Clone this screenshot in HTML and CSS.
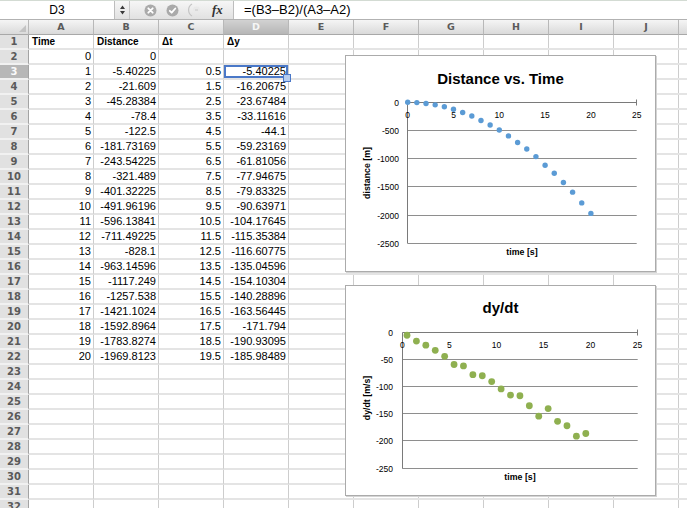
FILE: index.html
```html
<!DOCTYPE html>
<html lang="en">
<head>
<meta charset="utf-8">
<title>Sheet</title>
<link rel="stylesheet" href="styles.css">
</head>
<body>
<div class="bar">
  <div class="namebox">D3</div>
  <div class="stepper"><svg width="7" height="12" viewBox="0 0 7 12"><path d="M3.5 1.5L6 5H1z M3.5 10.5L1 7H6z" fill="#3a3a3a"/></svg></div>
  <div class="tools">
    <svg class="ico i-x" width="13" height="13" viewBox="0 0 13 13"><circle cx="6.5" cy="6.5" r="6" fill="#aaaaaa"/><path d="M4.3 4.3l4.4 4.4M8.7 4.3l-4.4 4.4" stroke="#fff" stroke-width="1.8" stroke-linecap="round"/></svg>
    <svg class="ico i-ok" width="13" height="13" viewBox="0 0 13 13"><circle cx="6.5" cy="6.5" r="6" fill="#aaaaaa"/><path d="M3.8 6.8l1.9 1.9 3.6-4.2" stroke="#fff" stroke-width="1.8" fill="none" stroke-linecap="round" stroke-linejoin="round"/></svg>
    <svg class="ico i-eq" width="12" height="14" viewBox="0 0 12 14"><path d="M4 1 A7 7 0 0 0 4 13" stroke="#c4c4c4" stroke-width="1.2" fill="none"/><circle cx="8.5" cy="7" r="3.5" fill="#e9e9e9"/><path d="M7 7h3" stroke="#cdcdcd" stroke-width="1.2"/></svg>
    <span class="fx">fx</span>
  </div>
  <div class="formula">=(B3–B2)/(A3–A2)</div>
</div>
<div class="sheet">
  <table class="grid">
    <colgroup><col class="ch"><col class="cw"><col class="cw"><col class="cw"><col class="cw"><col class="cw"><col class="cw"><col class="cw"><col class="cw"><col class="cw"><col class="cw"><col class="cw"></colgroup>
    <thead>
      <tr><th class="corner"></th><th>A</th><th>B</th><th>C</th><th class="on">D</th><th>E</th><th>F</th><th>G</th><th>H</th><th>I</th><th>J</th><th></th></tr>
    </thead>
    <tbody>
      <tr><th>1</th><td class="h">Time</td><td class="h">Distance</td><td class="h">Δt</td><td class="h">Δy</td><td class="rest" colspan="7"></td></tr>
      <tr><th>2</th><td class="n">0</td><td class="n">0</td><td></td><td></td><td class="rest" colspan="7"></td></tr>
      <tr><th class="on">3</th><td class="n">1</td><td class="n">-5.40225</td><td class="n">0.5</td><td class="n sel">-5.40225</td><td class="rest" colspan="7"></td></tr>
      <tr><th>4</th><td class="n">2</td><td class="n">-21.609</td><td class="n">1.5</td><td class="n">-16.20675</td><td class="rest" colspan="7"></td></tr>
      <tr><th>5</th><td class="n">3</td><td class="n">-45.28384</td><td class="n">2.5</td><td class="n">-23.67484</td><td class="rest" colspan="7"></td></tr>
      <tr><th>6</th><td class="n">4</td><td class="n">-78.4</td><td class="n">3.5</td><td class="n">-33.11616</td><td class="rest" colspan="7"></td></tr>
      <tr><th>7</th><td class="n">5</td><td class="n">-122.5</td><td class="n">4.5</td><td class="n">-44.1</td><td class="rest" colspan="7"></td></tr>
      <tr><th>8</th><td class="n">6</td><td class="n">-181.73169</td><td class="n">5.5</td><td class="n">-59.23169</td><td class="rest" colspan="7"></td></tr>
      <tr><th>9</th><td class="n">7</td><td class="n">-243.54225</td><td class="n">6.5</td><td class="n">-61.81056</td><td class="rest" colspan="7"></td></tr>
      <tr><th>10</th><td class="n">8</td><td class="n">-321.489</td><td class="n">7.5</td><td class="n">-77.94675</td><td class="rest" colspan="7"></td></tr>
      <tr><th>11</th><td class="n">9</td><td class="n">-401.32225</td><td class="n">8.5</td><td class="n">-79.83325</td><td class="rest" colspan="7"></td></tr>
      <tr><th>12</th><td class="n">10</td><td class="n">-491.96196</td><td class="n">9.5</td><td class="n">-90.63971</td><td class="rest" colspan="7"></td></tr>
      <tr><th>13</th><td class="n">11</td><td class="n">-596.13841</td><td class="n">10.5</td><td class="n">-104.17645</td><td class="rest" colspan="7"></td></tr>
      <tr><th>14</th><td class="n">12</td><td class="n">-711.49225</td><td class="n">11.5</td><td class="n">-115.35384</td><td class="rest" colspan="7"></td></tr>
      <tr><th>15</th><td class="n">13</td><td class="n">-828.1</td><td class="n">12.5</td><td class="n">-116.60775</td><td class="rest" colspan="7"></td></tr>
      <tr><th>16</th><td class="n">14</td><td class="n">-963.14596</td><td class="n">13.5</td><td class="n">-135.04596</td><td class="rest" colspan="7"></td></tr>
      <tr><th>17</th><td class="n">15</td><td class="n">-1117.249</td><td class="n">14.5</td><td class="n">-154.10304</td><td class="rest" colspan="7"></td></tr>
      <tr><th>18</th><td class="n">16</td><td class="n">-1257.538</td><td class="n">15.5</td><td class="n">-140.28896</td><td class="rest" colspan="7"></td></tr>
      <tr><th>19</th><td class="n">17</td><td class="n">-1421.1024</td><td class="n">16.5</td><td class="n">-163.56445</td><td class="rest" colspan="7"></td></tr>
      <tr><th>20</th><td class="n">18</td><td class="n">-1592.8964</td><td class="n">17.5</td><td class="n">-171.794</td><td class="rest" colspan="7"></td></tr>
      <tr><th>21</th><td class="n">19</td><td class="n">-1783.8274</td><td class="n">18.5</td><td class="n">-190.93095</td><td class="rest" colspan="7"></td></tr>
      <tr><th>22</th><td class="n">20</td><td class="n">-1969.8123</td><td class="n">19.5</td><td class="n">-185.98489</td><td class="rest" colspan="7"></td></tr>
      <tr><th>23</th><td></td><td></td><td></td><td></td><td class="rest" colspan="7"></td></tr>
      <tr><th>24</th><td></td><td></td><td></td><td></td><td class="rest" colspan="7"></td></tr>
      <tr><th>25</th><td></td><td></td><td></td><td></td><td class="rest" colspan="7"></td></tr>
      <tr><th>26</th><td></td><td></td><td></td><td></td><td class="rest" colspan="7"></td></tr>
      <tr><th>27</th><td></td><td></td><td></td><td></td><td class="rest" colspan="7"></td></tr>
      <tr><th>28</th><td></td><td></td><td></td><td></td><td class="rest" colspan="7"></td></tr>
      <tr><th>29</th><td></td><td></td><td></td><td></td><td class="rest" colspan="7"></td></tr>
      <tr><th>30</th><td></td><td></td><td></td><td></td><td class="rest" colspan="7"></td></tr>
      <tr><th>31</th><td></td><td></td><td></td><td></td><td class="rest" colspan="7"></td></tr>
      <tr><th>32</th><td></td><td></td><td></td><td></td><td class="rest" colspan="7"></td></tr>
    </tbody>
  </table>

  <div class="chart c1">
    <svg width="309" height="215" viewBox="1 1 309 215">
      <text class="ttl" x="155.5" y="29" text-anchor="middle">Distance vs. Time</text>
      <g class="gl">
        <line x1="62.7" y1="75.5" x2="291.7" y2="75.5"/>
        <line x1="62.7" y1="103.5" x2="291.7" y2="103.5"/>
        <line x1="62.7" y1="131.5" x2="291.7" y2="131.5"/>
        <line x1="62.7" y1="160.5" x2="291.7" y2="160.5"/>
        <line x1="62.7" y1="188.5" x2="291.7" y2="188.5"/>
      </g>
      <g class="ax">
        <line x1="62.5" y1="47.5" x2="62.5" y2="188.5"/>
        <line x1="62.5" y1="47.5" x2="291.7" y2="47.5"/>
        <line x1="291.5" y1="44.5" x2="291.5" y2="50.5"/>
      </g>
      <g class="tick" text-anchor="end">
        <text x="54" y="50.5">0</text>
        <text x="54" y="78.5">-500</text>
        <text x="54" y="106.5">-1000</text>
        <text x="54" y="134.5">-1500</text>
        <text x="54" y="163.5">-2000</text>
        <text x="54" y="191.5">-2500</text>
      </g>
      <g class="tick" text-anchor="middle">
        <text x="62.7" y="63">0</text>
        <text x="108.5" y="63">5</text>
        <text x="154.3" y="63">10</text>
        <text x="200.1" y="63">15</text>
        <text x="245.9" y="63">20</text>
        <text x="291.7" y="63">25</text>
      </g>
      <text class="atl" transform="translate(25 118) rotate(-90)" text-anchor="middle">distance [m]</text>
      <text class="atl" x="177" y="200" text-anchor="middle">time [s]</text>
      <g class="blue">
        <circle cx="62.7" cy="47.3" r="2.7"/><circle cx="71.86" cy="47.6" r="2.7"/><circle cx="81.02" cy="48.52" r="2.7"/><circle cx="90.18" cy="49.85" r="2.7"/><circle cx="99.34" cy="51.72" r="2.7"/><circle cx="108.5" cy="54.21" r="2.7"/><circle cx="117.66" cy="57.55" r="2.7"/><circle cx="126.82" cy="61.04" r="2.7"/><circle cx="135.98" cy="65.43" r="2.7"/><circle cx="145.14" cy="69.93" r="2.7"/><circle cx="154.3" cy="75.05" r="2.7"/><circle cx="163.46" cy="80.92" r="2.7"/><circle cx="172.62" cy="87.43" r="2.7"/><circle cx="181.78" cy="94" r="2.7"/><circle cx="190.94" cy="101.62" r="2.7"/><circle cx="200.1" cy="110.31" r="2.7"/><circle cx="209.26" cy="118.22" r="2.7"/><circle cx="218.42" cy="127.45" r="2.7"/><circle cx="227.58" cy="137.14" r="2.7"/><circle cx="236.74" cy="147.91" r="2.7"/><circle cx="245.9" cy="158.4" r="2.7"/>
      </g>
    </svg>
  </div>

  <div class="chart c2">
    <svg width="309" height="209" viewBox="1 1 309 209">
      <text class="ttl" x="155.5" y="28" text-anchor="middle">dy/dt</text>
      <g class="gl">
        <line x1="57.3" y1="74.5" x2="292.7" y2="74.5"/>
        <line x1="57.3" y1="101.5" x2="292.7" y2="101.5"/>
        <line x1="57.3" y1="128.5" x2="292.7" y2="128.5"/>
        <line x1="57.3" y1="155.5" x2="292.7" y2="155.5"/>
        <line x1="57.3" y1="183.5" x2="292.7" y2="183.5"/>
      </g>
      <g class="ax">
        <line x1="57.5" y1="47.5" x2="57.5" y2="183.5"/>
        <line x1="57.5" y1="47.5" x2="292.7" y2="47.5"/>
        <line x1="292.5" y1="44.5" x2="292.5" y2="50.5"/>
      </g>
      <g class="tick" text-anchor="end">
        <text x="48" y="50.5">0</text>
        <text x="48" y="77.5">-50</text>
        <text x="48" y="104.5">-100</text>
        <text x="48" y="131.5">-150</text>
        <text x="48" y="158.5">-200</text>
        <text x="48" y="186.5">-250</text>
      </g>
      <g class="tick" text-anchor="middle">
        <text x="57.3" y="62.5">0</text>
        <text x="104.35" y="62.5">5</text>
        <text x="151.4" y="62.5">10</text>
        <text x="198.45" y="62.5">15</text>
        <text x="245.5" y="62.5">20</text>
        <text x="292.55" y="62.5">25</text>
      </g>
      <text class="atl" transform="translate(25 113) rotate(-90)" text-anchor="middle">dy/dt [m/s]</text>
      <text class="atl" x="175" y="195" text-anchor="middle">time [s]</text>
      <g class="green">
        <circle cx="62" cy="50.24" r="3.4"/><circle cx="71.42" cy="56.12" r="3.4"/><circle cx="80.83" cy="60.18" r="3.4"/><circle cx="90.24" cy="65.32" r="3.4"/><circle cx="99.65" cy="71.29" r="3.4"/><circle cx="109.06" cy="79.52" r="3.4"/><circle cx="118.47" cy="80.93" r="3.4"/><circle cx="127.88" cy="89.7" r="3.4"/><circle cx="137.29" cy="90.73" r="3.4"/><circle cx="146.7" cy="96.61" r="3.4"/><circle cx="156.11" cy="103.97" r="3.4"/><circle cx="165.52" cy="110.05" r="3.4"/><circle cx="174.93" cy="110.74" r="3.4"/><circle cx="184.34" cy="120.77" r="3.4"/><circle cx="193.75" cy="131.13" r="3.4"/><circle cx="203.16" cy="123.62" r="3.4"/><circle cx="212.57" cy="136.28" r="3.4"/><circle cx="221.98" cy="140.76" r="3.4"/><circle cx="231.39" cy="151.17" r="3.4"/><circle cx="240.8" cy="148.48" r="3.4"/>
      </g>
    </svg>
  </div>
</div>
</body>
</html>
```
FILE: styles.css
```css
* { box-sizing: border-box; }
html, body { margin: 0; padding: 0; }
body {
  width: 687px;
  height: 508px;
  overflow: hidden;
  background: #fff;
  color: #000;
  font-family: "Liberation Sans", Arial, sans-serif;
}

/* formula bar */
.bar {
  display: flex;
  height: 20px;
  border-top: 1px solid #d3dbd3;
  border-bottom: 1px solid #b2b2b2;
  background: linear-gradient(#f6f6f6, #e1e1e1);
}
.namebox {
  width: 115px;
  background: #fff;
  border-right: 1px solid #bdbdbd;
  text-align: center;
  font-size: 12px;
  line-height: 18px;
}
.stepper {
  width: 15px;
  display: flex;
  align-items: center;
  justify-content: center;
  border-right: 1px solid #c6c6c6;
}
.tools {
  width: 103px;
  display: flex;
  align-items: center;
}
.ico { display: block; flex: none; }
.i-x { margin-left: 14px; }
.i-ok { margin-left: 9px; }
.i-eq { margin-left: 9px; }
.fx {
  margin-left: 12px;
  font-family: "Liberation Serif", "Times New Roman", serif;
  font-style: italic;
  font-weight: bold;
  font-size: 13px;
  color: #333;
  line-height: 18px;
}
.formula {
  flex: 1;
  background: #fff;
  border-left: 1px solid #bdbdbd;
  padding-left: 10px;
  font-size: 13px;
  line-height: 18px;
  white-space: nowrap;
}

/* sheet */
.sheet {
  position: relative;
  height: 488px;
  overflow: hidden;
}
.grid {
  border-collapse: separate;
  border-spacing: 0;
  table-layout: fixed;
  width: 744px;
}
col.ch { width: 29px; }
col.cw { width: 65px; }

thead th {
  height: 15px;
  padding: 0;
  font: bold 9.5px "DejaVu Sans", sans-serif;
  color: #5a5a5a;
  background: linear-gradient(#f5f5f5, #dadada);
  border-right: 1px solid #b8b8b8;
  border-bottom: 1px solid #a8a8a8;
  text-align: center;
  line-height: 14px;
}
thead th.on {
  background: linear-gradient(#d2d2d2, #b6b6b6);
  color: #f6f6f6;
}
thead th.corner { position: relative; }
thead th.corner::after {
  content: "";
  position: absolute;
  right: 2px;
  bottom: 2px;
  border-left: 7px solid transparent;
  border-bottom: 7px solid #c3c3c3;
}

tbody tr { height: 15px; }
tbody th {
  height: 15px;
  padding: 0;
  font: bold 10px "DejaVu Sans", sans-serif;
  color: #5a5a5a;
  background: #e1e1e1;
  border-right: 1px solid #a3a3a3;
  border-bottom: 2px solid #f1f1f1;
  text-align: center;
  line-height: 13px;
}
tbody th.on {
  background: #b7b7b7;
  color: #fafafa;
}
td {
  height: 15px;
  padding: 0 2px 0 3px;
  border-right: 1px solid #cdcdcd;
  border-bottom: 2px solid #e4e4e4;
  font-size: 11px;
  line-height: 13px;
  white-space: nowrap;
  overflow: hidden;
}
td.n { text-align: right; }
td.h { font-weight: bold; font-size: 10px; }
td.rest {
  border-right: 0;
  background: repeating-linear-gradient(90deg, transparent 0 64px, #cdcdcd 64px 65px);
}
td.sel {
  position: relative;
  overflow: visible;
  box-shadow: inset 0 0 0 2px #4a78c8;
}
td.sel::after {
  content: "";
  position: absolute;
  right: -3px;
  bottom: -4px;
  width: 6px;
  height: 6px;
  background: #b7cdee;
  border: 1px solid #4a78c8;
}

/* charts */
.chart {
  position: absolute;
  left: 345px;
  width: 311px;
  background: #fff;
  border: 1px solid #ababab;
  box-shadow: 1px 1px 0 #d4d4d4;
}
.c1 { top: 35px; height: 217px; }
.c2 { top: 265px; height: 211px; }
.chart svg { display: block; }
.ttl { font: bold 15px "Liberation Sans", Arial, sans-serif; fill: #000; }
.tick { font: 8.5px "Liberation Sans", Arial, sans-serif; fill: #000; }
.atl { font: bold 8.8px "Liberation Sans", Arial, sans-serif; fill: #000; }
.gl line { stroke: #8e8e8e; stroke-width: 1; }
.ax line { stroke: #7a7a7a; stroke-width: 1; }
.blue circle { fill: #5b9bd5; }
.green circle { fill: #8fb050; }
```
